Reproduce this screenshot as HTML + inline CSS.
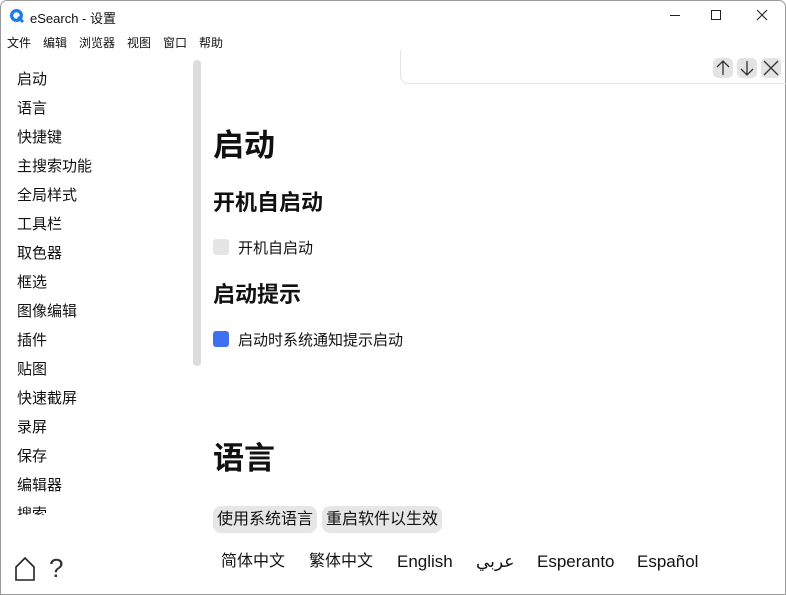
<!DOCTYPE html>
<html><head><meta charset="utf-8"><style>
*{margin:0;padding:0;box-sizing:border-box}
body{width:786px;height:595px;overflow:hidden;background:#fff;font-family:"Liberation Sans","Noto Sans CJK SC",sans-serif;color:#111;position:relative}
.win{position:absolute;left:0;top:0;width:786px;height:595px;border:1px solid #9a9a9a;border-radius:7px 7px 0 0}
.abs{position:absolute;white-space:nowrap}
.side{font-size:15px;line-height:29px}
.cb{position:absolute;width:16px;height:16px;border-radius:3px}
.btn{position:absolute;top:506px;height:27px;background:#e6e6e6;border-radius:8px;font-size:16px;line-height:27px;padding:0 4px}
.lang{font-size:16px;top:552px;line-height:20px}
.m{position:absolute;top:35px;font-size:12px;line-height:16px}
.ib{position:absolute;top:58px;width:20px;height:20px;background:#e3e3e3;border-radius:5px}
</style></head><body>
<div class="win"></div>
<svg class="abs" style="left:9px;top:8px" width="16" height="16" viewBox="0 0 16 16"><circle cx="7.5" cy="7.5" r="6.5" fill="#1f7be8"/><circle cx="7.5" cy="7.5" r="3.2" fill="#fff"/><path d="M9 9 L14 14" stroke="#1f7be8" stroke-width="3"/></svg>
<div class="abs" style="left:30px;top:8px;font-size:13px">eSearch - 设置</div>
<div class="abs" style="left:670px;top:15px;width:10px;height:1px;background:#222"></div>
<div class="abs" style="left:711px;top:10px;width:10px;height:10px;border:1px solid #222"></div>
<svg class="abs" style="left:756px;top:9px" width="12" height="12"><path d="M1 1L11 11M11 1L1 11" stroke="#222" stroke-width="1.1"/></svg>
<div class="m" style="left:7px">文件</div><div class="m" style="left:43px">编辑</div><div class="m" style="left:79px">浏览器</div><div class="m" style="left:127px">视图</div><div class="m" style="left:163px">窗口</div><div class="m" style="left:199px">帮助</div>
<div class="abs side" style="left:17px;top:65px;height:450px;overflow:hidden">启动<br>语言<br>快捷键<br>主搜索功能<br>全局样式<br>工具栏<br>取色器<br>框选<br>图像编辑<br>插件<br>贴图<br>快速截屏<br>录屏<br>保存<br>编辑器<br>搜索</div>
<div class="abs" style="left:193px;top:60px;width:8px;height:306px;background:#dcdcdc;border-radius:4px"></div>
<svg class="abs" style="left:14px;top:556px" width="22" height="26"><path d="M2 24V11L11 2L20 11V24Z" fill="none" stroke="#222" stroke-width="1.6"/></svg>
<div class="abs" style="left:49px;top:553px;font-size:26px;color:#333">?</div>
<div class="abs" style="left:400px;top:50px;width:390px;height:34px;border:1px solid #e3e3e3;border-top:none;border-radius:0 0 0 8px"></div>
<div class="ib" style="left:713px"></div><div class="ib" style="left:737px"></div><div class="ib" style="left:761px"></div>
<svg class="abs" style="left:713px;top:58px" width="70" height="20"><g stroke="#333" stroke-width="1.3" fill="none"><path d="M10 3V17M4 9L10 3L16 9"/><path d="M34 3V17M28 11L34 17L40 11"/><path d="M51 3L65 17M65 3L51 17"/></g></svg>
<div class="abs" style="left:213px;top:120px;font-size:31px;font-weight:bold">启动</div>
<div class="abs" style="left:213px;top:185px;font-size:22px;font-weight:bold">开机自启动</div>
<div class="cb" style="left:213px;top:239px;background:#e5e5e5"></div>
<div class="abs" style="left:238px;top:237px;font-size:15px">开机自启动</div>
<div class="abs" style="left:213px;top:277px;font-size:22px;font-weight:bold">启动提示</div>
<div class="cb" style="left:213px;top:331px;background:#3f70f0"></div>
<div class="abs" style="left:238px;top:329px;font-size:15px">启动时系统通知提示启动</div>
<div class="abs" style="left:213px;top:433px;font-size:31px;font-weight:bold">语言</div>
<div class="btn" style="left:213px">使用系统语言</div>
<div class="btn" style="left:322px">重启软件以生效</div>
<div class="abs lang" style="left:221px">简体中文</div>
<div class="abs lang" style="left:309px">繁体中文</div>
<div class="abs lang" style="left:397px;font-size:17px">English</div>
<div class="abs lang" style="left:476px;font-size:17px">عربي</div>
<div class="abs lang" style="left:537px;font-size:17px">Esperanto</div>
<div class="abs lang" style="left:637px;font-size:17px">Español</div>
</body></html>
